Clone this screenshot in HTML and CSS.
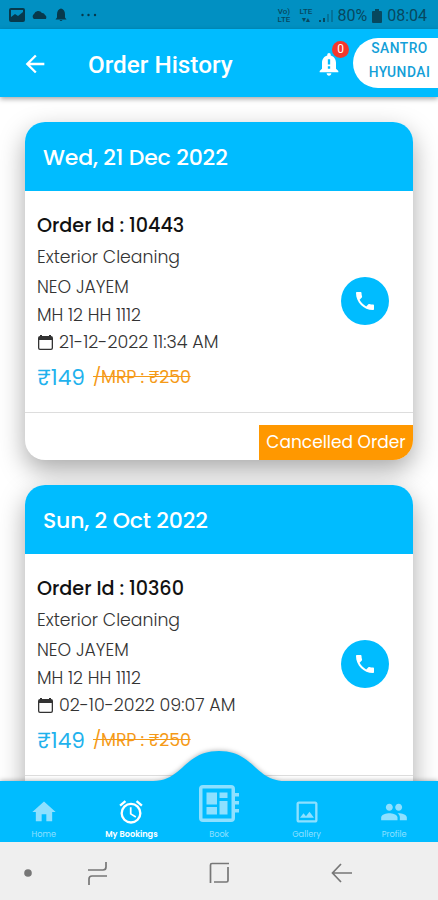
FILE: index.html
```html
<!DOCTYPE html>
<html lang="en">
<head>
<meta charset="utf-8">
<title>Order History</title>
<link rel="stylesheet" href="styles.css">
</head>
<body>
<div class="status">
  <svg class="status-left" width="100" height="29" viewBox="0 0 100 29">
    <path fill-rule="evenodd" d="M11 8h12q2 0 2 2v10q0 2-2 2H11q-2 0-2-2V10q0-2 2-2zm0 2v7l4-3 3 2 5-4v-2z"/>
    <path d="M34 19a3 3 0 0 1 0-5 4.500 4.500 0 0 1 8-1 3 3 0 0 1 3 2q2 1 1 4z"/>
    <path d="M61 8.500q4 1 4 6v3l1.500 2h-11l1.500-2v-3q0-5 4-6zM59.500 20h3q-1.500 2-3 0z"/>
    <circle cx="82.500" cy="15" r="1.200"/><circle cx="88.500" cy="15" r="1.200"/><circle cx="95" cy="15" r="1.200"/>
  </svg>
  <div class="status-right">
    <span class="net">Vo)<br>LTE</span>
    <span class="net lte">LTE<br>▾▴</span>
    <svg width="16" height="14" viewBox="0 0 16 14"><path d="M1 11h2v2H1zM5 9h2v4H5z"/><path opacity=".4" d="M9 5h2v8H9zM13 1h2v12h-2z"/></svg>
    <span class="pct">80%</span>
    <svg class="batt" width="10" height="14" viewBox="0 0 10 14"><path d="M3 0h4v2h2q1 0 1 1v10q0 1-1 1H1q-1 0-1-1V3q0-1 1-1h2z"/></svg>
    <span class="clock">08:04</span>
  </div>
</div>
<header class="appbar">
  <svg class="back" width="28" height="28" viewBox="0 0 24 24"><path d="M20 11H7.830l5.590-5.590L12 4l-8 8 8 8 1.410-1.410L7.830 13H20z"/></svg>
  <h1>Order History</h1>
  <div class="bell">
    <svg width="28" height="28" viewBox="0 0 24 24"><path fill-rule="evenodd" d="M12 22c1.100 0 2-.9 2-2h-4c0 1.100.9 2 2 2zm6-6v-5c0-3.070-1.640-5.640-4.500-6.320V4a1.500 1.500 0 0 0-3 0v.68C7.630 5.360 6 7.920 6 11v5l-2 2v1h16v-1zM11 8h2v4.500h-2zm0 6h2v2h-2z"/></svg>
    <span class="count">0</span>
  </div>
  <div class="car"><span class="santro">SANTRO</span><span>HYUNDAI</span></div>
</header>
<main>
  <article class="card">
    <h2>Wed, 21 Dec 2022</h2>
    <div class="details">
      <div class="info">
        <p class="order">Order Id : 10443</p>
        <p class="service">Exterior Cleaning</p>
        <p class="name">NEO JAYEM</p>
        <p class="plate">MH 12 HH 1112</p>
        <p class="when"><svg width="17" height="17" viewBox="0 0 17 17"><path fill-rule="evenodd" d="M3 1h2v1h7V1h2v1q2 0 2 2v10q0 2-2 2H3q-2 0-2-2V4q0-2 2-2zM2.300 6v8q0 .8.800.8h10.800q.8 0 .8-.8V6z"/></svg><span>21-12-2022 11:34 AM</span></p>
        <p class="price"><span class="now">₹149</span><s>/MRP : ₹250</s></p>
      </div>
      <div class="call"><svg width="24" height="24" viewBox="0 0 24 24"><path d="M6.620 10.790c1.440 2.830 3.760 5.140 6.590 6.590l2.200-2.200c.27-.27.670-.36 1.020-.24 1.120.37 2.330.57 3.570.57.550 0 1 .45 1 1V20c0 .55-.45 1-1 1C10.610 21 3 13.390 3 4c0-.55.450-1 1-1h3.500c.55 0 1 .45 1 1 0 1.250.2 2.450.57 3.570.11.35.03.74-.25 1.020z"/></svg></div>
    </div>
    <div class="foot"><span class="cancelled">Cancelled Order</span></div>
  </article>
  <article class="card">
    <h2>Sun, 2 Oct 2022</h2>
    <div class="details">
      <div class="info">
        <p class="order">Order Id : 10360</p>
        <p class="service">Exterior Cleaning</p>
        <p class="name">NEO JAYEM</p>
        <p class="plate">MH 12 HH 1112</p>
        <p class="when"><svg width="17" height="17" viewBox="0 0 17 17"><path fill-rule="evenodd" d="M3 1h2v1h7V1h2v1q2 0 2 2v10q0 2-2 2H3q-2 0-2-2V4q0-2 2-2zM2.300 6v8q0 .8.800.8h10.800q.8 0 .8-.8V6z"/></svg><span>02-10-2022 09:07 AM</span></p>
        <p class="price"><span class="now">₹149</span><s>/MRP : ₹250</s></p>
      </div>
      <div class="call"><svg width="24" height="24" viewBox="0 0 24 24"><path d="M6.620 10.790c1.440 2.830 3.760 5.140 6.590 6.590l2.200-2.200c.27-.27.670-.36 1.020-.24 1.120.37 2.330.57 3.570.57.550 0 1 .45 1 1V20c0 .55-.45 1-1 1C10.610 21 3 13.390 3 4c0-.55.450-1 1-1h3.500c.55 0 1 .45 1 1 0 1.250.2 2.450.57 3.570.11.35.03.74-.25 1.020z"/></svg></div>
    </div>
    <div class="foot"></div>
  </article>
</main>
<nav class="tabs">
  <svg class="hump" width="438" height="92" viewBox="0 0 438 92"><path d="M0 31H153C183 31 184 1 219 1S255 31 285 31H438V92H0z"/></svg>
  <div class="tab"><svg width="28" height="28" viewBox="0 0 24 24"><path d="M10 20v-6h4v6h5v-8h3L12 3 2 12h3v8z"/></svg><span>Home</span></div>
  <div class="tab active"><svg width="28" height="28" viewBox="0 0 24 24"><path d="M22 5.720l-4.600-3.860-1.290 1.530 4.600 3.860zM7.880 3.390L6.600 1.860 2 5.710l1.290 1.530zM12.500 8H11v6l4.750 2.850.75-1.230-4-2.370zM12 4a9 9 0 1 0 0 18 9 9 0 0 0 0-18zm0 16a7 7 0 1 1 0-14 7 7 0 0 1 0 14z"/></svg><span>My Bookings</span></div>
  <div class="tab book"><svg width="48" height="44" viewBox="0 0 48 44"><path fill-rule="evenodd" d="M8 3h28q4 0 4 4v4h4v3.500h-4V19h4v3.500h-4V27h4v3.500h-4V36q0 4-4 4H8q-4 0-4-4V7q0-4 4-4zm-.5 3.500v30h29v-30z"/><path d="M11.500 10.500H22v12H11.500zM24.500 10.500h8V16h-8zM11.500 25H22v7.500H11.500zM24.500 19h8v13.500h-8z"/></svg><span>Book</span></div>
  <div class="tab"><svg width="28" height="28" viewBox="0 0 24 24"><path d="M19 5v14H5V5zm0-2H5c-1.100 0-2 .9-2 2v14c0 1.100.9 2 2 2h14c1.100 0 2-.9 2-2V5c0-1.100-.9-2-2-2zm-4.860 8.860l-3 3.870L9 13.140 6 17h12z"/></svg><span>Gallery</span></div>
  <div class="tab"><svg width="28" height="28" viewBox="0 0 24 24"><path d="M16 11c1.660 0 2.990-1.340 2.990-3S17.660 5 16 5s-3 1.340-3 3 1.340 3 3 3zm-8 0c1.660 0 2.990-1.340 2.990-3S9.660 5 8 5 5 6.340 5 8s1.340 3 3 3zm0 2c-2.330 0-7 1.170-7 3.500V19h14v-2.500c0-2.330-4.670-3.500-7-3.500zm8 0c-.29 0-.62.020-.97.050 1.160.84 1.970 1.970 1.970 3.450V19h6v-2.500c0-2.330-4.670-3.500-7-3.500z"/></svg><span>Profile</span></div>
</nav>
<div class="system">
  <svg width="438" height="58" viewBox="0 0 438 58">
    <circle cx="28" cy="31" r="3.800" fill="#777"/>
    <path d="M88 28h15q3 0 3-3v-5M89 43v-6q0-3 3-3h15M229 21.500h-17q-1.500 0-1.500 1.500v18M214 40h12.500q1.500 0 1.500-1.500V25M333 31h19M341 22l-8.500 9 8.500 9"/>
  </svg>
</div>
</body>
</html>
```
FILE: styles.css
```css
* { box-sizing: border-box; }
body {
  margin: 0;
  width: 438px;
  height: 900px;
  overflow: hidden;
  display: flex;
  flex-direction: column;
  background: #fff;
  font-family: Poppins, Inter, "Noto Sans", sans-serif;
}
h1, h2, p { margin: 0; }
svg { display: block; flex: none; }

.status {
  height: 29px;
  flex: none;
  display: flex;
  justify-content: space-between;
  background: #0190c2;
  color: #07485f;
  fill: #07394c;
  font-family: Roboto, sans-serif;
}
.status-right { display: flex; align-items: center; padding: 2px 11px 0 0; fill: #07485f; }
.net { width: 15px; margin-right: 7px; font-size: 8px; line-height: 8px; font-weight: 500; text-align: center; }
.lte { margin-right: 5px; }
.pct { font-size: 16px; margin-left: 3px; }
.batt { margin: 0 5px 0 5px; }
.clock { font-size: 16px; }

.appbar {
  height: 68px;
  flex: none;
  display: flex;
  align-items: center;
  position: relative;
  z-index: 2;
  background: #00bcff;
  box-shadow: 0 2px 5px rgba(0, 0, 0, .35);
  color: #fff;
  fill: #fff;
  font-family: Roboto, sans-serif;
}
.back { margin: 1px 0 0 21px; }
.appbar h1 { flex: none; margin-left: 39px; width: 227px; padding-top: 3px; font-size: 24.300px; font-weight: 500; white-space: nowrap; }
.bell { position: relative; margin-top: 1px; }
.count {
  position: absolute;
  left: 17px;
  top: -9px;
  width: 17px;
  height: 17px;
  border-radius: 50%;
  background: #f4372c;
  font-size: 12px;
  line-height: 17px;
  text-align: center;
}
.car {
  flex: none;
  width: 90px;
  height: 50px;
  margin-left: 10px;
  padding-left: 3px;
  display: flex;
  flex-direction: column;
  align-items: center;
  border-radius: 25px 0 0 25px;
  background: #fff;
  color: #149fd8;
  font-size: 13.800px;
  font-weight: 500;
  line-height: 24px;
  letter-spacing: .5px;
}
.car .santro { margin-top: -2px; }

main {
  flex: 1;
  min-height: 0;
  overflow: hidden;
  padding: 25px 25px 0;
  display: flex;
  flex-direction: column;
  gap: 25px;
}
.card {
  height: 338px;
  flex: none;
  border-radius: 20px;
  background: #fff;
  box-shadow: 0 10px 26px rgba(0, 0, 0, .34);
}
.card h2 {
  height: 69px;
  padding-left: 18px;
  border-radius: 20px 20px 0 0;
  background: #00bcff;
  color: #fff;
  font-size: 22px;
  font-weight: 500;
  line-height: 71px;
  letter-spacing: -.18px;
  white-space: nowrap;
}
.details { height: 222px; display: flex; justify-content: space-between; align-items: center; padding: 0 24px 1px 12px; border-bottom: 1px solid #ddd; }
.info { align-self: flex-start; padding-top: 18px; white-space: nowrap; color: #333; font-size: 17.300px; font-weight: 300; }
.info .order { color: #111; font-size: 19.200px; font-weight: 500; line-height: 33px; letter-spacing: -.03px; }
.service { line-height: 30px; }
.name { line-height: 30px; }
.plate { line-height: 26px; }
.when { display: flex; align-items: center; gap: 5px; line-height: 29px; font-size: 17.500px; fill: #333; }
.price { display: flex; gap: 8px; line-height: 41px; }
.now { color: #1fb2ed; font-size: 21.700px; font-weight: 400; }
.price s { color: #f59a17; font-size: 17.400px; font-weight: 400; letter-spacing: -.2px; }
.call { width: 48px; height: 48px; border-radius: 50%; background: #00bcff; fill: #fff; display: grid; place-items: center; }
.foot { height: 47px; display: flex; justify-content: flex-end; align-items: flex-end; }
.cancelled {
  width: 154px;
  height: 35px;
  border-radius: 0 0 20px 0;
  background: #ff9800;
  color: #fff;
  font-size: 17px;
  line-height: 35px;
  text-align: center;
  white-space: nowrap;
}

.tabs {
  position: relative;
  z-index: 3;
  height: 61px;
  flex: none;
  display: grid;
  grid-template-columns: repeat(5, 1fr);
  color: #8ee0ff;
  fill: #8ee0ff;
}
.hump { position: absolute; left: 0; bottom: 0; fill: #00bcff; filter: drop-shadow(0 -1px 2px rgba(0, 0, 0, .25)); }
.tab { position: relative; display: flex; flex-direction: column; align-items: center; justify-content: flex-end; padding-bottom: 2px; font-size: 8.200px; line-height: 12px; }
.tab svg { margin-bottom: 2px; }
.tab.active { color: #fff; fill: #fff; font-weight: 600; }
.system { height: 58px; flex: none; background: #efefef; position: relative; z-index: 4; }
.system path { fill: none; stroke: #777; stroke-width: 1.700; }
```
